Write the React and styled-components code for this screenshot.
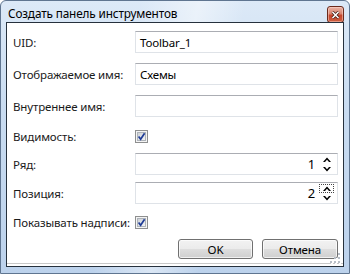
import styled, { createGlobalStyle } from "styled-components";

const GlobalStyle = createGlobalStyle`
  html, body {
    margin: 0;
    padding: 0;
    background: #ffffff;
  }
  * {
    box-sizing: border-box;
  }
`;

const Window = styled.div`
  width: 350px;
  height: 274px;
  border: 1px solid #5f7590;
  border-radius: 6px 6px 0 0;
  padding: 0 5px 6px;
  display: flex;
  flex-direction: column;
  background:
    linear-gradient(100deg, rgba(255, 255, 255, 0) 35%, rgba(255, 255, 255, 0.45) 50%, rgba(255, 255, 255, 0) 62%),
    linear-gradient(180deg, #dce9f7 0%, #c9dcf1 40%, #bcd2ec 100%);
  font-family: "Noto Sans", "Open Sans", sans-serif;
  font-size: 11.5px;
  letter-spacing: -0.15px;
  color: #1a1a1a;
`;

const TitleBar = styled.div`
  height: 21px;
  display: flex;
  align-items: center;
  justify-content: space-between;
  padding-left: 2px;
`;

const Title = styled.span`
  font-size: 11.8px;
  color: #000;
  padding-top: 2px;
`;

const CloseButton = styled.div`
  width: 17px;
  height: 17px;
  margin-top: 6px;
  border: 1px solid #6a2a1c;
  border-radius: 3px;
  background: linear-gradient(180deg, #e9b3a5 0%, #d98570 45%, #c4452c 55%, #cf5e3f 100%);
  box-shadow: inset 0 0 0 1px rgba(255, 220, 210, 0.5);
  display: flex;
  align-items: center;
  justify-content: center;
`;

const Client = styled.div`
  flex: 1;
  position: relative;
  background: #ffffff;
  border: 1px solid #26313d;
  box-shadow: inset 0 -2px 0 #ffffff, inset 0 -3px 0 #c8c8c8;
  padding: 3px 5px 0 5px;
  display: flex;
  flex-direction: column;
`;

const Row = styled.div`
  height: ${(p) => p.$h}px;
  display: grid;
  grid-template-columns: 123px 1fr;
  align-items: center;
`;

const Label = styled.span`
  padding-left: 1px;
  white-space: nowrap;
`;

const TextBox = styled.div`
  height: 22px;
  border: 1px solid #dfe3e8;
  border-top-color: #abadb3;
  display: flex;
  align-items: center;
  padding: 0 4px;
  color: #000;
`;

const SpinBox = styled(TextBox)`
  justify-content: flex-end;
  padding-right: 4px;
`;

const SpinValue = styled.span`
  margin-right: 5px;
  font-size: 13px;
`;

const SpinArrows = styled.div`
  display: flex;
  flex-direction: column;
  gap: 3px;
`;

const ArrowCell = styled.div`
  width: 13px;
  height: 7px;
  display: flex;
  align-items: center;
  justify-content: center;
  outline: ${(p) => (p.$focus ? "1px dotted #444" : "none")};
`;

const ButtonRow = styled.div`
  display: flex;
  justify-content: flex-end;
  gap: 9px;
  margin-top: 3px;
`;

const Button = styled.button`
  width: ${(p) => p.$w}px;
  height: 20px;
  border: 1px solid #707070;
  border-radius: 3px;
  background: linear-gradient(180deg, #f2f2f2 0%, #ebebeb 48%, #dddddd 52%, #cfcfcf 100%);
  box-shadow: inset 0 0 0 1px rgba(255, 255, 255, 0.7);
  font-family: "Noto Sans", "Open Sans", sans-serif;
  font-size: 11.5px;
  letter-spacing: -0.15px;
  color: #000;
  padding: 0;
`;

const Grip = styled.svg`
  position: absolute;
  right: 2px;
  bottom: 2px;
`;

const CheckBox = () => (
  <svg width="13" height="13" viewBox="0 0 13 13">
    <defs>
      <linearGradient id="cbg" x1="0" y1="0" x2="1" y2="1">
        <stop offset="0" stopColor="#cbcfd5" />
        <stop offset="1" stopColor="#f6f6f6" />
      </linearGradient>
    </defs>
    <rect x="0.5" y="0.5" width="12" height="12" fill="#f4f4f4" stroke="#8e8f8f" />
    <rect x="2.5" y="2.5" width="8" height="8" fill="url(#cbg)" stroke="#aeb3b9" />
    <path d="M3.6 6.6 L5.6 9.2 L9.6 3.2" stroke="#1f3c96" strokeWidth="1.7" fill="none" />
  </svg>
);

const Arrow = ({ up }) => (
  <svg width="8" height="5" viewBox="0 0 8 5">
    <path
      d={up ? "M0 5 L4 0.5 L8 5 L6 5 L4 2.8 L2 5 Z" : "M0 0 L4 4.5 L8 0 L6 0 L4 2.2 L2 0 Z"}
      fill="#000"
    />
  </svg>
);

const Spin = ({ value, focus }) => (
  <SpinBox>
    <SpinValue>{value}</SpinValue>
    <SpinArrows>
      <ArrowCell $focus={focus}>
        <Arrow up />
      </ArrowCell>
      <ArrowCell>
        <Arrow />
      </ArrowCell>
    </SpinArrows>
  </SpinBox>
);

export default function App() {
  return (
    <>
      <GlobalStyle />
      <Window>
        <TitleBar>
          <Title>Создать панель инструментов</Title>
          <CloseButton>
            <svg width="9" height="8" viewBox="0 0 9 8">
              <path d="M1.5 1 L7.5 7 M7.5 1 L1.5 7" stroke="#3b1a12" strokeWidth="3" />
              <path d="M1.5 1 L7.5 7 M7.5 1 L1.5 7" stroke="#ffffff" strokeWidth="1.6" />
            </svg>
          </CloseButton>
        </TitleBar>
        <Client>
          <Row $h={32}>
            <Label>UID:</Label>
            <TextBox>Toolbar_1</TextBox>
          </Row>
          <Row $h={32}>
            <Label>Отображаемое имя:</Label>
            <TextBox>Схемы</TextBox>
          </Row>
          <Row $h={32}>
            <Label>Внутреннее имя:</Label>
            <TextBox />
          </Row>
          <Row $h={28}>
            <Label>Видимость:</Label>
            <CheckBox />
          </Row>
          <Row $h={28}>
            <Label>Ряд:</Label>
            <Spin value="1" />
          </Row>
          <Row $h={30}>
            <Label>Позиция:</Label>
            <Spin value="2" focus />
          </Row>
          <Row $h={28}>
            <Label>Показывать надписи:</Label>
            <CheckBox />
          </Row>
          <ButtonRow>
            <Button $w={75}>OK</Button>
            <Button $w={76}>Отмена</Button>
          </ButtonRow>
          <Grip width="11" height="11" viewBox="0 0 11 11">
            {[
              [8, 0],
              [8, 4],
              [4, 4],
              [8, 8],
              [4, 8],
              [0, 8],
            ].map(([x, y]) => (
              <g key={`${x}-${y}`}>
                <rect x={x + 1} y={y + 1} width="2" height="2" fill="#ffffff" />
                <rect x={x} y={y} width="2" height="2" fill="#b8bfc8" />
              </g>
            ))}
          </Grip>
        </Client>
      </Window>
    </>
  );
}
